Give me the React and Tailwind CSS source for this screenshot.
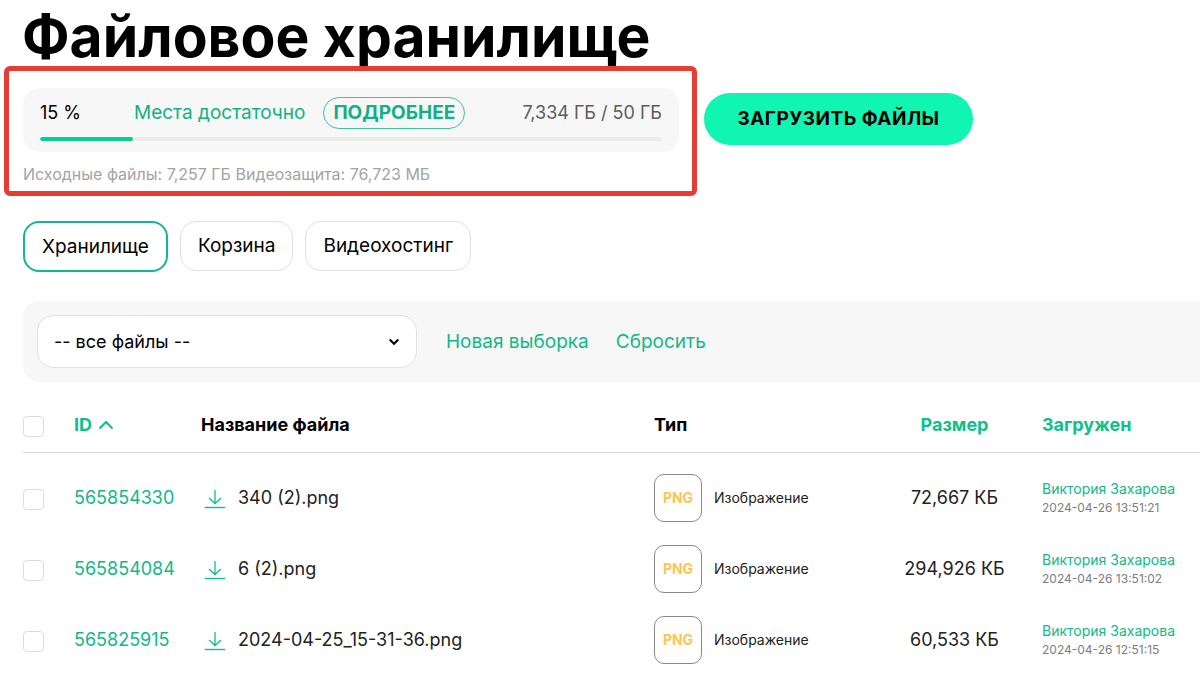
import React from 'react';

const files = [
  { id: '565854330', name: '340 (2).png', size: '72,667 КБ', date: '2024-04-26 13:51:21' },
  { id: '565854084', name: '6 (2).png', size: '294,926 КБ', date: '2024-04-26 13:51:02' },
  { id: '565825915', name: '2024-04-25_15-31-36.png', size: '60,533 КБ', date: '2024-04-26 12:51:15' },
];

function Checkbox({ label }) {
  return (
    <input
      type="checkbox"
      aria-label={label}
      className="mt-[2px] block size-[21px] appearance-none rounded border border-[#dcdcdc] bg-white checked:bg-[#0fbf8a]"
    />
  );
}

function DownloadIcon() {
  return (
    <svg viewBox="0 0 22 20" className="mt-[2px] h-5 w-[22px]" fill="none" stroke="#0fbf8a" aria-hidden="true">
      <path d="M11 1v13.500M5 9l6 5.500L17 9" strokeWidth="1.3" />
      <path d="M.7 18.500h20.600" strokeWidth="1.4" />
    </svg>
  );
}

function StoragePanel() {
  return (
    <section className="w-[693px] rounded-md border-[5px] border-[#e63c33] pt-[17px] pr-[13px] pb-[7px] pl-[14px]">
      <div className="rounded-2xl bg-[#f7f7f7] px-[17px] pt-[9px] pb-[11px]">
        <div className="flex h-8 items-center">
          <span className="w-[94px]">15 %</span>
          <span className="text-[19px] text-[#12b083]">Места достаточно</span>
          <a
            href="#details"
            className="ml-[18px] flex h-8 items-center rounded-full border border-[#3fc39d] px-[9px] text-[19px] font-bold text-[#12b083]"
          >
            ПОДРОБНЕЕ
          </a>
          <span className="ml-auto text-[#5c5c5c]">7,334 ГБ / 50 ГБ</span>
        </div>
        <div className="mt-2 h-1 overflow-hidden rounded-full bg-[#ebebeb]">
          <div className="h-full rounded-full bg-[#05cf94]" style={{ width: '15%' }} />
        </div>
      </div>
      <p className="mt-3 text-[16px] leading-5 text-[#a3a3a3]">Исходные файлы: 7,257 ГБ Видеозащита: 76,723 МБ</p>
    </section>
  );
}

export default function App() {
  return (
    <main className="min-h-screen overflow-x-hidden bg-white font-['Inter',sans-serif] text-[18px] leading-6 text-black">
      <h1 className="pt-2 pl-[22px] text-[57px] leading-[58px] font-bold">Файловое хранилище</h1>
      <div className="flex items-start gap-[7px] pl-1">
        <StoragePanel />
        <button type="button" className="mt-[27px] h-[52px] w-[269px] rounded-full bg-[#11f5b3] text-[19px] font-bold tracking-wide">
          ЗАГРУЗИТЬ ФАЙЛЫ
        </button>
      </div>

      <nav className="mt-[25px] flex items-start gap-3 pl-[23px] text-[19px]">
        <button type="button" className="h-[51px] rounded-2xl border-2 border-[#12b98a] px-[17px]">Хранилище</button>
        <button type="button" className="h-[50px] rounded-2xl border border-[#e0e0e0] px-[17px]">Корзина</button>
        <button type="button" className="h-[50px] rounded-2xl border border-[#e0e0e0] px-[17px]">Видеохостинг</button>
      </nav>

      <div className="mt-[29px] ml-[23px] flex items-center rounded-l-2xl bg-[#f7f7f7] py-[14px] pl-[14px]">
        <div className="relative w-[380px]">
          <select
            aria-label="Выборка файлов"
            className="h-[53px] w-full appearance-none rounded-2xl border border-[#e0e0e0] bg-white px-4"
          >
            <option>-- все файлы --</option>
          </select>
          <svg
            viewBox="0 0 10 8"
            className="pointer-events-none absolute top-[23px] right-[18px] h-2 w-[10px]"
            fill="none"
            stroke="black"
            strokeWidth="2"
            aria-hidden="true"
          >
            <path d="M.7 1.500 5 5.800 9.300 1.500" />
          </svg>
        </div>
        <a href="#new" className="ml-[29px] text-[19px] text-[#12b886]">Новая выборка</a>
        <a href="#reset" className="ml-[27px] text-[19px] text-[#12b886]">Сбросить</a>
      </div>

      <div className="mt-[17px] ml-[23px]">
        <table className="w-full table-fixed border-collapse text-left">
          <colgroup>
            <col className="w-[51px]" />
            <col className="w-[127px]" />
            <col />
            <col className="w-[213px]" />
            <col className="w-[175px]" />
            <col className="w-[158px]" />
          </colgroup>
          <thead>
            <tr className="h-[53px] border-b border-[#dadada]">
              <th><Checkbox label="Выбрать все" /></th>
              <th>
                <a href="#id" className="flex items-center gap-[6px] text-[#0fbf8a]">
                  ID
                  <svg viewBox="0 0 16 10" className="h-[10px] w-4" fill="none" stroke="currentColor" strokeWidth="2" aria-hidden="true">
                    <path d="M1.500 8.500 8 2l6.500 6.500" />
                  </svg>
                </a>
              </th>
              <th>Название файла</th>
              <th>Тип</th>
              <th className="text-center"><a href="#size" className="text-[#0fbf8a]">Размер</a></th>
              <th><a href="#uploaded" className="text-[#0fbf8a]">Загружен</a></th>
            </tr>
          </thead>
          <tbody className="text-[#222] before:block before:h-[10px]">
            {files.map((file) => (
              <tr key={file.id} className="h-[71px]">
                <td><Checkbox label={file.name} /></td>
                <td><a href="#file" className="text-[#12b886]">{file.id}</a></td>
                <td>
                  <div className="flex items-center gap-3 pl-[3px]">
                    <a href="#download" aria-label="Скачать"><DownloadIcon /></a>
                    {file.name}
                  </div>
                </td>
                <td>
                  <div className="flex items-center gap-3 text-[14px]">
                    <span className="flex size-12 items-center justify-center rounded-[10px] border border-[#8a8a8a] font-bold text-[#ffc54d]">
                      PNG
                    </span>
                    Изображение
                  </div>
                </td>
                <td className="text-center">{file.size}</td>
                <td>
                  <a href="#user" className="block text-[14px] leading-5 whitespace-nowrap text-[#12b886]">Виктория Захарова</a>
                  <span className="block text-[12px] leading-[18px] text-[#7d7d7d]">{file.date}</span>
                </td>
              </tr>
            ))}
          </tbody>
        </table>
      </div>
    </main>
  );
}
